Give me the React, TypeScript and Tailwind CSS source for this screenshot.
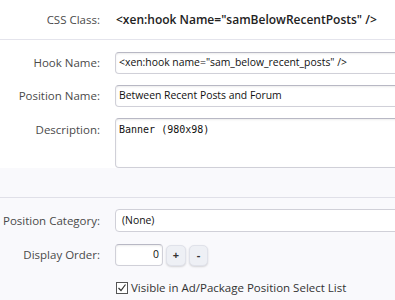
export default function App() {
  const label = "w-[100px] shrink-0 text-right text-[#4a4a4a] text-[11.5px] whitespace-nowrap";
  const input =
    "h-[22px] w-[300px] rounded-[4px] border border-[#d0d0d8] border-t-[#b8b8c4] bg-white pl-[3px] flex items-center text-[10.4px] text-[#111] shadow-[inset_0_1px_2px_rgba(0,0,0,0.08)]";
  return (
    <div className="w-[395px] h-[300px] overflow-hidden bg-[#f9f9fc] font-['Open_Sans',sans-serif]">
      <div className="bg-white h-[40px] border-b border-[#e4e4ec] flex items-center">
        <div className={label}>CSS Class:</div>
        <div className="ml-[16px] text-[12px] font-semibold text-[#222] whitespace-nowrap">
          &lt;xen:hook Name="samBelowRecentPosts" /&gt;
        </div>
      </div>
      <div className="bg-white pt-[12px] flex flex-col gap-[11px]">
        <div className="flex items-center">
          <div className={label}>Hook Name:</div>
          <div className="ml-[15px]">
            <div className={input}>
              <span className="whitespace-nowrap">&lt;xen:hook name="sam_below_recent_posts" /&gt;</span>
            </div>
          </div>
        </div>
        <div className="flex items-center">
          <div className={label}>Position Name:</div>
          <div className="ml-[15px]">
            <div className={input}>
              <span className="whitespace-nowrap">Between Recent Posts and Forum</span>
            </div>
          </div>
        </div>
        <div className="flex items-start">
          <div className={label + " mt-[3px]"}>Description:</div>
          <div className="ml-[15px]">
            <div className="h-[50px] w-[300px] rounded-[4px] border border-[#d0d0d8] border-t-[#b8b8c4] bg-white pl-[3px] pt-[3px] text-[10px] font-['DejaVu_Sans_Mono',monospace] text-[#111] shadow-[inset_0_1px_2px_rgba(0,0,0,0.08)]">
              Banner (980x98)
            </div>
          </div>
        </div>
      </div>
      <div className="h-[30px] border-b border-[#e0e0e8]"></div>
      <div className="pt-[11px] flex flex-col">
        <div className="flex items-center">
          <div className={label}>Position Category:</div>
          <div className="ml-[15px]">
            <div className="h-[23px] w-[300px] rounded-[4px] border border-[#d0d0d8] bg-white pl-[6px] flex items-center text-[10.4px] text-[#111]">
              (None)
            </div>
          </div>
        </div>
        <div className="flex items-center mt-[12px]">
          <div className={label}>Display Order:</div>
          <div className="ml-[15px] flex items-center gap-[3px]">
            <div className="h-[22px] w-[48px] rounded-[4px] border border-[#d0d0d8] border-t-[#b8b8c4] bg-white pr-[3px] flex items-center justify-end text-[10.4px] text-[#111] shadow-[inset_0_1px_2px_rgba(0,0,0,0.08)]">
              0
            </div>
            <div className="h-[21px] w-[20px] rounded-[5px] bg-[#eef0f5] border border-[#e0e2ea] shadow-[0_1px_2px_rgba(0,0,0,0.15)] flex items-center justify-center text-[11px] font-bold text-[#333]">
              +
            </div>
            <div className="h-[21px] w-[19px] rounded-[5px] bg-[#eef0f5] border border-[#e0e2ea] shadow-[0_1px_2px_rgba(0,0,0,0.15)] flex items-center justify-center text-[11px] font-bold text-[#333]">
              -
            </div>
          </div>
        </div>
        <div className="flex items-center mt-[13px] ml-[116px] gap-[3px]">
          <svg width="12" height="12" viewBox="0 0 12 12">
            <rect x="0.5" y="0.5" width="11" height="11" fill="white" stroke="#555" />
            <path d="M2.5 6 L5 8.5 L9.5 2.5" fill="none" stroke="#333" strokeWidth="1.2" />
          </svg>
          <span className="text-[11.5px] text-[#333] whitespace-nowrap">Visible in Ad/Package Position Select List</span>
        </div>
      </div>
    </div>
  );
}
